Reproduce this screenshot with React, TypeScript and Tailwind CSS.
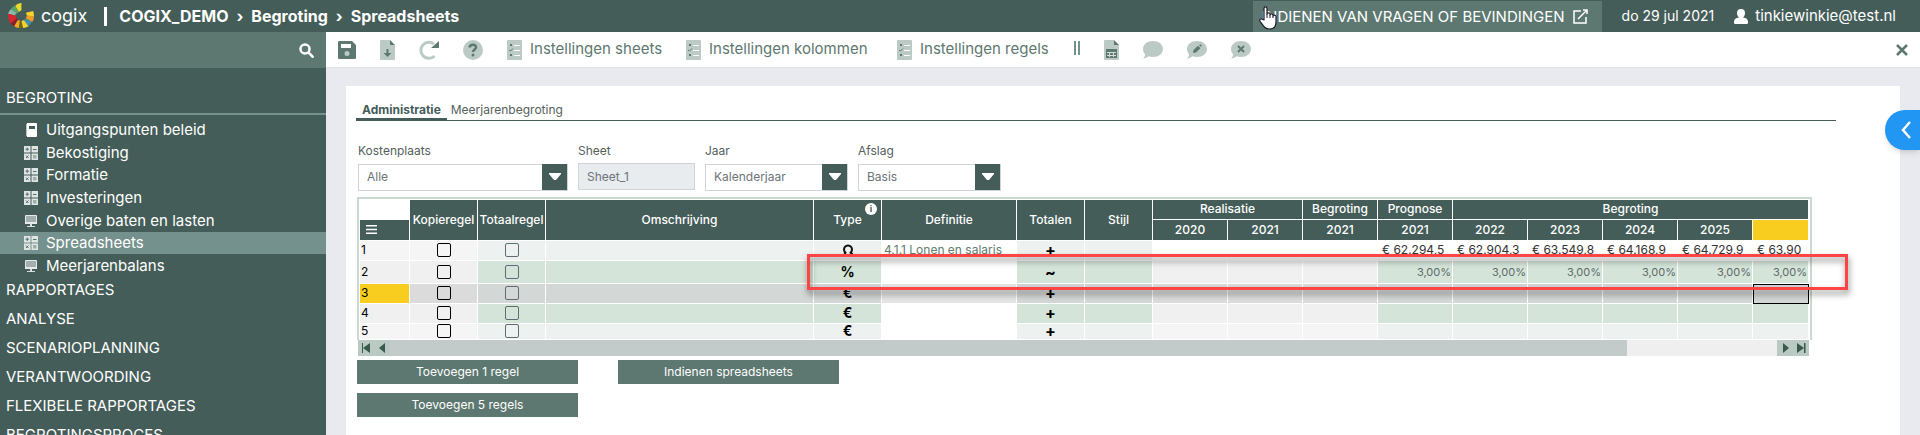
import React from "react";

const menu = [
  { label: "Uitgangspunten beleid", icon: "book" },
  { label: "Bekostiging", icon: "calc" },
  { label: "Formatie", icon: "calc" },
  { label: "Investeringen", icon: "calc" },
  { label: "Overige baten en lasten", icon: "screen" },
  { label: "Spreadsheets", icon: "calc", active: true },
  { label: "Meerjarenbalans", icon: "screen" },
];

const sections = [
  "RAPPORTAGES",
  "ANALYSE",
  "SCENARIOPLANNING",
  "VERANTWOORDING",
  "FLEXIBELE RAPPORTAGES",
  "BEGROTINGSPROCES",
];

const columnWidths = [
  "w-[50px]", "w-[68px]", "w-[68px]", "w-[268px]", "w-[68px]", "w-[135px]", "w-[68px]", "w-[68px]",
  "w-[75px]", "w-[75px]", "w-[75px]", "w-[75px]", "w-[75px]", "w-[75px]", "w-[75px]", "w-[75px]", "w-[56px]",
];

type Row = {
  nr: number;
  height: string;
  type: string;
  definitie?: string;
  totalen: string;
  values?: string[];
  tone: "light" | "green" | "selected";
};

const percent = ["3,00%", "3,00%", "3,00%", "3,00%", "3,00%", "3,00%"];

const rows: Row[] = [
  {
    nr: 1,
    height: "h-5",
    type: "search",
    definitie: "4.1.1 Lonen en salaris",
    totalen: "+",
    values: ["€ 62.294,5", "€ 62.904,3", "€ 63.549,8", "€ 64.168,9", "€ 64.729,9", "€ 63.90"],
    tone: "light",
  },
  { nr: 2, height: "h-[23px]", type: "%", totalen: "~", values: percent, tone: "green" },
  { nr: 3, height: "h-5", type: "€", totalen: "+", tone: "selected" },
  { nr: 4, height: "h-5", type: "€", totalen: "+", tone: "green" },
  { nr: 5, height: "h-4", type: "€", totalen: "+", tone: "light" },
];

const tones = {
  light: { nr: "bg-[#f5f5f5]", plain: "bg-[#f5f5f5]", cell: "bg-[#edf1f0]", def: "bg-white" },
  green: { nr: "bg-[#f0f0f0]", plain: "bg-[#f0f0f0]", cell: "bg-[#d4e4d9]", def: "bg-white" },
  selected: { nr: "bg-[#f8cd1f]", plain: "bg-[#dbdbdb]", cell: "bg-[#d3d7d6]", def: "bg-[#e5e5e5]" },
};

function Logo() {
  const parts = [
    ["#e9d92b", "M14 0 L15 0 L15 8 L12 10 L8 3 Q10 1 14 0Z"],
    ["#5aa469", "M8 3 L12 10 L10 12 L3 7 Q5 4 8 3Z"],
    ["#8fb9a8", "M3 7 L9 11 L8 14 L0 12 Q1 9 3 7Z"],
    ["#d9262c", "M0 12 L8 14 L10 18 L3 23 Q0 19 0 12Z"],
    ["#8a1f2c", "M3 23 L10 17 L11 19 L7 26 Q4 25 3 23Z"],
    ["#f7a823", "M7 26 L11 19 L14 20 L13 28 Q9 28 7 26Z"],
    ["#6c6a1e", "M13 20 L15 20 L18 28 L12 28Z"],
    ["#f5d130", "M15 20 L18 19 L23 26 Q20 28 17 28Z"],
    ["#3f8fb0", "M18 19 L20 17 L27 21 L23 26Z"],
    ["#f39c1f", "M20 17 L21 14 L29 15 Q29 19 27 21Z"],
    ["#f9d32b", "M21 14 L20 11 L28 9 Q29 11 29 15Z"],
  ];
  return (
    <svg viewBox="0 0 29 29" className="size-[26px]" aria-hidden="true">
      {parts.map(([fill, d]) => <path key={d} fill={fill} d={d} />)}
    </svg>
  );
}

function MenuIcon({ name }: { name: string }) {
  if (name === "book") {
    return (
      <svg viewBox="0 0 14 14" className="size-3.5" aria-hidden="true">
        <path fill="#fff" d="M3 0h9a1 1 0 0 1 1 1v12a1 1 0 0 1-1 1H3z" />
        <path fill="#b9c5c1" d="M2 1h1v12H2z" />
        <path fill="#445d58" d="M5 3h6v3H5z" />
      </svg>
    );
  }
  if (name === "screen") {
    return (
      <svg viewBox="0 0 14 14" className="size-3.5" aria-hidden="true">
        <path fill="#e6eae9" d="M2 1h10a1 1 0 0 1 1 1v8H1V2a1 1 0 0 1 1-1z" />
        <path fill="#a3afac" d="M2 2h10v6H2z" />
        <path fill="#d9dfdd" d="M6 10h2v2h3v1H3v-1h3z" />
      </svg>
    );
  }
  return (
    <svg viewBox="0 0 14 14" className="size-3.5" aria-hidden="true">
      <path fill="#dfe5e3" d="M0 0h6.500v6.500H0zM7.500 0H14v6.500H7.500zM0 7.500h6.500V14H0zM7.500 7.500H14V14H7.500z" />
      <path stroke="#55706a" d="M3.200 1.500v3.500M1.500 3.200H5M9 3.500h3.500M2 9.500l2.500 2.500M4.500 9.500L2 12" />
      <path fill="#9fb0ab" d="M9 9h3.500v3.500H9z" />
    </svg>
  );
}

function ListIcon() {
  return (
    <svg viewBox="0 0 15 20" className="h-5 w-[15px] shrink-0" aria-hidden="true">
      <rect width="15" height="20" rx="1" fill="#bccac6" />
      <path fill="#5d7870" d="M3 4h2v2H3zM3 14h2v2H3z" />
      <path stroke="#5d7870" fill="none" d="M2 10l1.500 1L6 8.500" />
      <path stroke="#fff" d="M7 5.500h6M7 10.500h6M7 15.500h6" />
    </svg>
  );
}

function FileIcon({ kind }: { kind: "download" | "table" }) {
  return (
    <svg viewBox="0 0 15 20" className="h-5 w-[15px]" aria-hidden="true">
      <path fill="#bccac6" d="M1 0h9v5h5v14a1 1 0 0 1-1 1H1a1 1 0 0 1-1-1V1a1 1 0 0 1 1-1z" />
      <path fill="#5d7870" d="M10 0l5 5h-5z" />
      {kind === "download" ? (
        <path fill="#5d7870" d="M6.500 9h2v4h3l-4 4-4-4h3z" />
      ) : (
        <>
          <path fill="#5d7870" d="M2 9h11v9H2z" />
          <path stroke="#d5dedb" d="M3 12.500h9M3 15.500h9M5.500 12v5M9.500 12v5" />
        </>
      )}
    </svg>
  );
}

function CommentIcon({ children }: { children?: React.ReactNode }) {
  return (
    <svg viewBox="0 0 20 18" className="h-[18px] w-5" aria-hidden="true">
      <path fill="#bccac6" d="M10 0c5.600 0 10 3.500 10 8s-4.400 8-10 8c-1.600 0-3-.3-4.300-.8C4.300 16.300 2.300 17.500 0 17.500c1-1 2-2.500 2.200-4C.8 12 0 10.200 0 8c0-4.500 4.400-8 10-8z" />
      {children}
    </svg>
  );
}

function ToolButton({ label, children }: { label: string; children: React.ReactNode }) {
  return <button type="button" aria-label={label} className="flex items-center">{children}</button>;
}

function SettingsButton({ label, width }: { label: string; width: string }) {
  return (
    <button type="button" className={`${width} flex shrink-0 items-center gap-2 whitespace-nowrap text-[15px] text-[#5d7870]`}>
      <ListIcon />
      {label}
    </button>
  );
}

function Dropdown({ id, label, value, width }: { id: string; label: string; value: string; width: string }) {
  return (
    <div className={width}>
      <label htmlFor={id} className="block h-5 text-xs text-[#55605d]">{label}</label>
      <div className="relative">
        <select id={id} className="h-[27px] w-full appearance-none border border-[#ced4da] bg-white px-2 text-xs text-[#6b7478] outline-none">
          <option>{value}</option>
        </select>
        <span className="pointer-events-none absolute inset-y-px right-px flex w-[25px] items-center justify-center bg-[#445d58]">
          <svg viewBox="0 0 12 8" className="h-2 w-3" aria-hidden="true"><path fill="#fff" d="M0 0h12v1L7 7H5L0 1z" /></svg>
        </span>
      </div>
    </div>
  );
}

function SheetRow({ row }: { row: Row }) {
  const tone = tones[row.tone];
  const first = row.nr === 1;
  const cell = "overflow-hidden whitespace-nowrap border-b border-r border-white p-0";
  const amount = first ? "bg-white pl-1 text-[#333]" : `${tone.cell} pr-px text-right text-[11px] leading-3 text-[#5c6b67]`;
  return (
    <tr className={row.height}>
      <td className={`${cell} ${tone.nr} pl-px text-black`}>{row.nr}</td>
      <td className={`${cell} ${tone.plain}`}>
        <input type="checkbox" aria-label={`Kopieregel ${row.nr}`} className="mx-auto block size-3.5 appearance-none rounded-xs border border-black" />
      </td>
      <td className={`${cell} ${tone.cell}`}>
        <input type="checkbox" aria-label={`Totaalregel ${row.nr}`} className="mx-auto block size-3.5 appearance-none rounded-xs border border-[#5f6b70]" />
      </td>
      <td className={`${cell} ${tone.cell}`} />
      <td className={`${cell} ${tone.cell} text-center text-sm leading-3 font-bold text-black`}>
        {row.type === "search" ? (
          <svg viewBox="0 0 12 12" className="mx-auto size-3" aria-hidden="true">
            <path fill="none" stroke="#111" strokeWidth="2" d="M4 9A4 4 0 1 1 8 9M8 8l3 3M4 8l-2 3" />
          </svg>
        ) : row.type}
      </td>
      <td className={`${cell} ${tone.def} pl-0.5 text-[#5f8070]`}>{row.definitie}</td>
      <td className={`${cell} ${tone.cell} text-center text-base leading-3 font-bold text-black`}>{row.totalen}</td>
      <td className={`${cell} ${tone.cell}`} />
      {[0, 1, 2].map((i) => <td key={i} className={`${cell} ${first ? "bg-white" : tone.plain}`} />)}
      {[0, 1, 2, 3, 4, 5].map((i) => (
        <td key={i} className={`${cell} ${amount} ${row.tone === "selected" && i === 5 ? "outline -outline-offset-1 outline-black" : ""}`}>
          {row.values?.[i]}
        </td>
      ))}
    </tr>
  );
}

export default function App() {
  const th = "border-b border-r border-white bg-[#445d58] p-0 font-medium text-white";
  return (
    <div className="flex h-screen flex-col overflow-hidden bg-[#e9eaef] font-['Inter',sans-serif]">
      {/* Top bar */}
      <header className="flex h-8 shrink-0 items-center bg-[#445d58] pl-2 pr-6 text-white">
        <Logo />
        <span className="ml-[7px] text-lg leading-6">cogix</span>
        <span className="ml-[17px] h-[19px] w-[3px] bg-white" />
        <nav className="ml-3 flex items-center gap-2 text-base font-bold">
          <a href="#demo">COGIX_DEMO</a>
          <span>›</span>
          <a href="#begroting">Begroting</a>
          <span>›</span>
          <a href="#spreadsheets">Spreadsheets</a>
        </nav>
        <div className="ml-auto flex h-full items-center text-sm whitespace-nowrap">
          <a href="#vragen" className="relative mt-px flex h-[31px] w-[349px] items-center justify-end gap-2 bg-[#5d7870] pr-3.5 text-[15px]">
            INDIENEN VAN VRAGEN OF BEVINDINGEN
            <svg viewBox="0 0 15 15" className="size-[15px]" fill="none" stroke="#fff" strokeWidth="1.500" aria-hidden="true">
              <path d="M8 2H1v12h12V8M5 10l9-9M10 1h4v4" />
            </svg>
            <svg viewBox="0 0 18 24" className="absolute left-1.5 top-[5px] h-6 w-[18px]" aria-hidden="true">
              <path fill="#fff" stroke="#1b1b2b" strokeWidth="1.200" strokeLinejoin="round" d="M5 14V2.500C5 .3 8 .3 8 2.500V8c0-1.600 3-1.600 3 0v1c0-1.500 3-1.300 3 .3V10c0-1.300 3-1 3 .6V16c0 4-2 7-6.500 7S5 21 1.200 15.500C0 13.500 2 12 3.500 13.300z" />
              <path stroke="#1b1b2b" d="M8 8v4M11 9v3M14 10v2" />
            </svg>
          </a>
          <span className="ml-5">do 29 jul 2021</span>
          <svg viewBox="0 0 14 15" className="ml-5 mr-[7px] h-[15px] w-3.5" aria-hidden="true">
            <path fill="#fff" d="M7 0a4 4 0 0 1 4 4c0 2-1 4-2 4.500C12 9 14 10 14 13v1q0 1-1 1H1q-1 0-1-1v-1c0-3 2-4 5-4.500C4 8 3 6 3 4a4 4 0 0 1 4-4z" />
          </svg>
          <span className="text-[15px]">tinkiewinkie@test.nl</span>
        </div>
      </header>

      <div className="flex min-h-0 flex-1">
        {/* Sidebar */}
        <aside className="w-[326px] shrink-0 overflow-hidden bg-[#445d58] text-[15px] text-white">
          <div className="flex h-9 items-center justify-end bg-[#5d7870] pr-3">
            <button type="button" aria-label="Zoeken">
              <svg viewBox="0 0 15 15" className="size-[15px]" fill="none" stroke="#fff" strokeWidth="2.500" aria-hidden="true">
                <circle cx="6" cy="6" r="4.500" />
                <path d="M9.500 9.500l5 5" />
              </svg>
            </button>
          </div>
          <a href="#begroting" className="flex h-[47px] items-end border-b-2 border-[#75918d] pb-1 pl-1.5">BEGROTING</a>
          <ul className="flex h-[162px] flex-col pt-1">
            {menu.map((item) => (
              <li key={item.label} className="flex flex-1">
                <a href="#menu" className={item.active ? "flex flex-1 items-center gap-2 bg-[#75918d] pl-6 leading-5" : "flex flex-1 items-center gap-2 pl-6 leading-5"}>
                  <MenuIcon name={item.icon} />
                  {item.label}
                </a>
              </li>
            ))}
          </ul>
          <ul className="space-y-1 pt-px">
            {sections.map((name) => (
              <li key={name}><a href="#sectie" className="flex h-[25px] items-center pl-1.5">{name}</a></li>
            ))}
          </ul>
        </aside>

        <div className="flex min-w-0 flex-1 flex-col">
          {/* Toolbar */}
          <div className="flex h-9 shrink-0 items-center gap-6 border-b border-[#e0e2e6] bg-white pl-3 pr-3">
            <ToolButton label="Opslaan">
              <svg viewBox="0 0 18 18" className="size-[18px]" aria-hidden="true">
                <path fill="#5d7870" d="M1 0h13l4 4v13a1 1 0 0 1-1 1H1a1 1 0 0 1-1-1V1a1 1 0 0 1 1-1z" />
                <path fill="#fff" d="M3 3h10v4H3z" />
                <circle cx="9" cy="12.500" r="2.500" fill="#bccac6" />
              </svg>
            </ToolButton>
            <ToolButton label="Exporteren"><FileIcon kind="download" /></ToolButton>
            <ToolButton label="Vernieuwen">
              <svg viewBox="0 0 20 20" className="size-5" aria-hidden="true">
                <path fill="none" stroke="#bccac6" strokeWidth="3" d="M15 4.200A8 8 0 1 0 15.500 16" />
                <path fill="#5d7870" d="M20 1v7h-8z" />
              </svg>
            </ToolButton>
            <ToolButton label="Help">
              <svg viewBox="0 0 20 20" className="size-5" aria-hidden="true">
                <circle cx="10" cy="10" r="10" fill="#bccac6" />
                <path fill="none" stroke="#5d7870" strokeWidth="2.500" d="M6.500 7.500C7 3.500 13.500 4 13 7.500c-.2 2-3 2-3 4.500" />
                <circle cx="10" cy="15" r="1.500" fill="#5d7870" />
              </svg>
            </ToolButton>
            <SettingsButton label="Instellingen sheets" width="w-[155px]" />
            <SettingsButton label="Instellingen kolommen" width="w-[187px]" />
            <SettingsButton label="Instellingen regels" width="w-[153px]" />
            <span className="mb-1 h-3.5 w-1.5 border-x-2 border-[#75918d]" />
            <ToolButton label="Rekenblad"><FileIcon kind="table" /></ToolButton>
            <ToolButton label="Opmerking"><CommentIcon /></ToolButton>
            <ToolButton label="Opmerking bewerken">
              <CommentIcon><path fill="#5d7870" d="M6 12l.5-3L11 4.800l2.500 2.500L9 11.500zM12 4l1.500-.8 1.300 1.300L14 6z" /></CommentIcon>
            </ToolButton>
            <ToolButton label="Opmerking verwijderen">
              <CommentIcon><path stroke="#5d7870" strokeWidth="2" d="M7 5l6 6M13 5l-6 6" /></CommentIcon>
            </ToolButton>
            <button type="button" aria-label="Sluiten" className="ml-auto">
              <svg viewBox="0 0 12 12" className="size-3" aria-hidden="true"><path stroke="#5d7870" strokeWidth="2.500" d="M1 1l10 10M11 1L1 11" /></svg>
            </button>
          </div>

          <main className="relative mx-5 mt-[18px] flex-1 bg-white pl-2.5 pt-4">
            {/* Tabs */}
            <div className="mr-16 flex border-b border-[#445d58] text-xs text-[#55605d]">
              <a href="#administratie" className="border-b-2 border-[#445d58] px-1.5 font-bold text-[#445d58]">Administratie</a>
              <a href="#meerjaren" className="px-1">Meerjarenbegroting</a>
            </div>

            {/* Filters */}
            <div className="ml-0.5 mt-[22px] flex gap-2.5">
              <Dropdown id="kostenplaats" label="Kostenplaats" value="Alle" width="w-[210px]" />
              <div className="w-[117px]">
                <label htmlFor="sheet" className="block h-5 text-xs text-[#55605d]">Sheet</label>
                <input id="sheet" readOnly value="Sheet_1" className="h-[27px] w-full border border-[#ced4da] bg-[#e9ecef] px-2 text-xs text-[#6b7478] outline-none" />
              </div>
              <Dropdown id="jaar" label="Jaar" value="Kalenderjaar" width="w-[143px]" />
              <Dropdown id="afslag" label="Afslag" value="Basis" width="w-[143px]" />
            </div>

            {/* Spreadsheet */}
            <div className="relative ml-px mt-1.5 w-[1455px] border-2 border-b-0 border-[#c8dacd] pl-px pt-px">
              <div className="h-[140px] overflow-hidden">
                <table className="w-[1449px] table-fixed border-separate border-spacing-0 text-xs leading-3">
                  <colgroup>
                    {columnWidths.map((width, i) => <col key={i} className={width} />)}
                  </colgroup>
                  <thead>
                    <tr className="h-5">
                      <th className="bg-white p-0" />
                      <th rowSpan={2} className={th}>Kopieregel</th>
                      <th rowSpan={2} className={th}>Totaalregel</th>
                      <th rowSpan={2} className={th}>Omschrijving</th>
                      <th rowSpan={2} className={`${th} relative`}>
                        Type
                        <span className="absolute right-1 top-[3px] flex size-3 items-center justify-center rounded-full bg-white text-[9px] font-bold text-[#445d58]">i</span>
                      </th>
                      <th rowSpan={2} className={th}>Definitie</th>
                      <th rowSpan={2} className={th}>Totalen</th>
                      <th rowSpan={2} className={th}>Stijl</th>
                      <th colSpan={2} className={th}>Realisatie</th>
                      <th className={th}>Begroting</th>
                      <th className={th}>Prognose</th>
                      <th colSpan={5} className={th}>Begroting</th>
                    </tr>
                    <tr className="h-[21px]">
                      <th className={`${th} pl-1.5`}>
                        <svg viewBox="0 0 11 9" className="h-[9px] w-[11px]" aria-hidden="true"><path fill="#fff" d="M0 0h11v1.500H0zM0 3.700h11v1.500H0zM0 7.500h11V9H0z" /></svg>
                      </th>
                      {["2020", "2021", "2021", "2021", "2022", "2023", "2024", "2025"].map((year, i) => (
                        <th key={i} className={th}>{year}</th>
                      ))}
                      <th className="border-b border-r border-white bg-[#f8cd1f] p-0" />
                    </tr>
                  </thead>
                  <tbody>
                    {rows.map((row) => <SheetRow key={row.nr} row={row} />)}
                  </tbody>
                </table>
              </div>
              {/* Highlight around the indexation row */}
              <div className="pointer-events-none absolute left-[448px] top-[55px] h-9 w-[1041px] border-3 border-[#ff4444] drop-shadow-[1px_4px_3px_rgba(0,0,0,0.5)]" />
            </div>
            <div className="ml-0.5 flex h-4 w-[1451px] bg-[#efefef]">
              <div className="flex w-8 items-center gap-2 bg-[#bacac3] pl-1">
                <svg viewBox="0 0 9 10" className="h-2.5 w-[9px]" aria-hidden="true"><path fill="#38594e" d="M0 0h1v10H0zM8 0v10L1 5z" /></svg>
                <svg viewBox="0 0 6 10" className="h-2.5 w-1.5" aria-hidden="true"><path fill="#38594e" d="M6 0v10L0 5z" /></svg>
              </div>
              <div className="w-[1237px] bg-[#c3cbca]" />
              <div className="ml-auto flex w-8 items-center gap-2 bg-[#bacac3] pl-1.5">
                <svg viewBox="0 0 6 10" className="h-2.5 w-1.5" aria-hidden="true"><path fill="#38594e" d="M0 0v10l6-5z" /></svg>
                <svg viewBox="0 0 9 10" className="h-2.5 w-[9px]" aria-hidden="true"><path fill="#38594e" d="M0 0v10l7-5zM7 0h1.500v10H7z" /></svg>
              </div>
            </div>

            <div className="ml-px mt-1 flex items-start gap-10 text-xs text-white">
              <div className="flex flex-col gap-[9px]">
                <button type="button" className="h-6 w-[221px] bg-[#5d7870]">Toevoegen 1 regel</button>
                <button type="button" className="h-6 w-[221px] bg-[#5d7870]">Toevoegen 5 regels</button>
              </div>
              <button type="button" className="h-6 w-[221px] bg-[#5d7870]">Indienen spreadsheets</button>
            </div>

            <button type="button" aria-label="Paneel openen" className="absolute -right-5 top-6 flex h-10 w-[35px] items-center justify-center rounded-l-full bg-[#2196f3] pl-1.5 shadow-md">
              <svg viewBox="0 0 10 18" className="h-[18px] w-2.5" fill="none" stroke="#fff" strokeWidth="2.500" aria-hidden="true"><path d="M9 1L2 9l7 8" /></svg>
            </button>
          </main>
        </div>
      </div>
    </div>
  );
}
